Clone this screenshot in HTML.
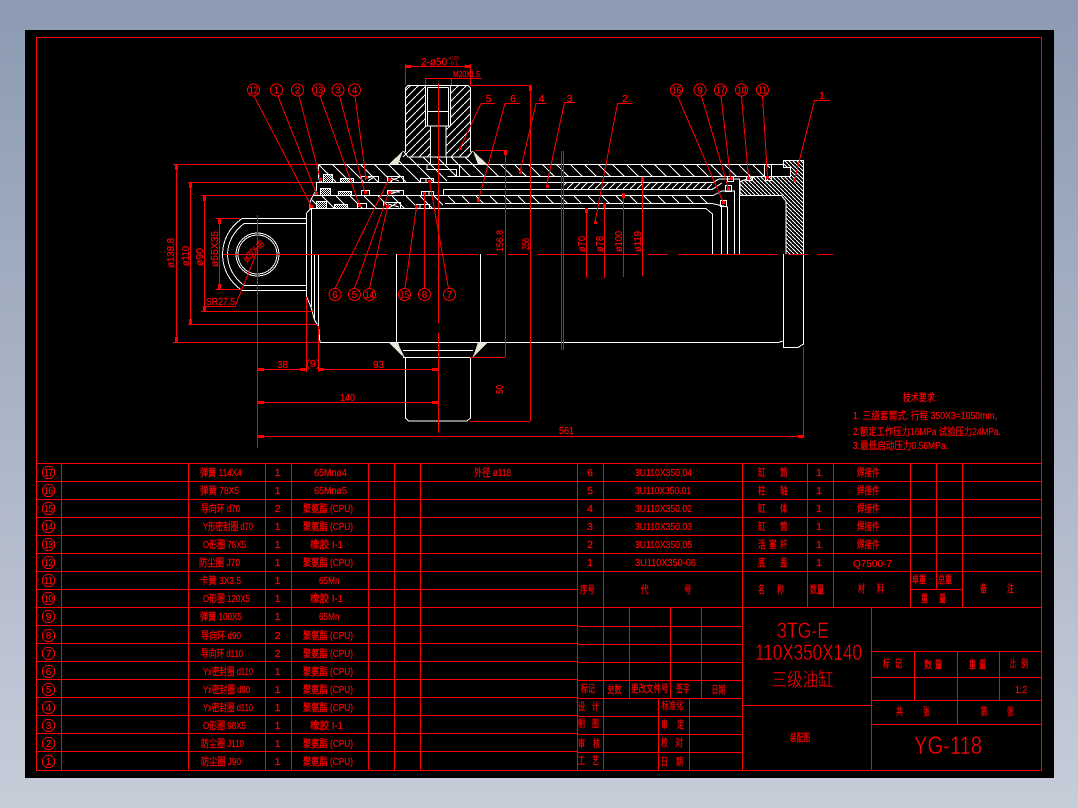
<!DOCTYPE html>
<html><head><meta charset="utf-8"><title>YG-118</title>
<style>
html,body{margin:0;padding:0;width:1078px;height:808px;overflow:hidden;background:linear-gradient(180deg,#8c9bb2 0%,#c7ccd9 100%)}
svg{position:absolute;left:0;top:0;display:block}
text{font-family:"Liberation Sans","WenQuanYi Zen Hei","Noto Sans CJK SC",sans-serif;fill:#f00;stroke:#f00;stroke-width:.2px;font-size:10.5px;white-space:pre}
.n{font-size:10px;text-anchor:middle}
.m{text-anchor:middle}
.r{stroke:#f00;fill:none}.w{stroke:#fff;fill:none}
.thin{stroke:#000;stroke-width:.4px}
</style></head><body>
<svg width="1078" height="808" viewBox="0 0 1078 808" xmlns="http://www.w3.org/2000/svg" shape-rendering="crispEdges">
<defs>
<pattern id="h1" width="14" height="14" patternUnits="userSpaceOnUse"><path d="M-1 -1L15 15" stroke="#fff" fill="none"/></pattern>
<pattern id="h2" width="7" height="7" patternUnits="userSpaceOnUse"><path d="M8 -1L-1 8" stroke="#fff" fill="none"/></pattern>
<pattern id="h3" width="8" height="8" patternUnits="userSpaceOnUse"><path d="M9 -1L-1 9" stroke="#fff" fill="none"/></pattern>
<pattern id="h4" width="4" height="4" patternUnits="userSpaceOnUse"><path d="M-1 -1L5 5" stroke="#fff" fill="none"/></pattern>
<pattern id="d" width="2" height="2" patternUnits="userSpaceOnUse"><rect width="1" height="1" fill="#fff"/><rect x="1" y="1" width="1" height="1" fill="#fff"/></pattern>
</defs>
<rect x="25" y="30" width="1029" height="748" fill="#000"/>

<!-- frame -->
<rect x="36.5" y="37.5" width="1005" height="733" class="r"/>

<!-- ============ table ============ -->
<path class="r" d="M36 463.5H1042M36 481.5H742M36 499.5H742M36 517.5H742M36 535.5H742M36 553.5H742M36 571.5H1042M36 589.5H61M420 589.5H577M36 607.5H1042M36 625.5H577M36 643.5H577M36 661.5H577M36 679.5H577M36 697.5H577M36 715.5H577M36 733.5H577M36 751.5H577
M742 481.5H1042M742 499.5H1042M742 517.5H1042M742 535.5H1042M742 553.5H1042M910 589.5H962M61 589.5H420
M577 626.5H742M577 644.5H742M577 662.5H742M577 680.5H742M577 698.5H742M577 716.5H742M577 734.5H742M577 752.5H742
M742 705.5H871M871 651.5H1042M871 677.5H1042M871 700.5H1042M871 724.5H1042
M61.5 463V770M188.5 463V770M265.5 463V770M291.5 463V770M368.5 463V770M394.5 463V770M420.5 463V770M577.5 463V770M603.5 463V770
M742.5 463V770M807.5 463V607M833.5 463V607M910.5 463V607M936.5 463V589M962.5 463V607
M629.5 607V698M670.5 607V698M701.5 607V698M658.5 698V770M689.5 698V770
M871.5 607V770M914.5 651V700M957.5 651V724M999.5 651V700"/>

<!-- circled numbers -->
<g class="r">
<circle cx="48.5" cy="472.5" r="6.2"/><circle cx="48.5" cy="490.5" r="6.2"/><circle cx="48.5" cy="508.5" r="6.2"/><circle cx="48.5" cy="526.5" r="6.2"/><circle cx="48.5" cy="544.5" r="6.2"/><circle cx="48.5" cy="562.5" r="6.2"/><circle cx="48.5" cy="580.5" r="6.2"/><circle cx="48.5" cy="598.5" r="6.2"/><circle cx="48.5" cy="616.5" r="6.2"/><circle cx="48.5" cy="635.5" r="6.2"/><circle cx="48.5" cy="653.5" r="6.2"/><circle cx="48.5" cy="671.5" r="6.2"/><circle cx="48.5" cy="689.5" r="6.2"/><circle cx="48.5" cy="707.5" r="6.2"/><circle cx="48.5" cy="725.5" r="6.2"/><circle cx="48.5" cy="743.5" r="6.2"/><circle cx="48.5" cy="761.5" r="6.2"/>
</g>
<text class="n" x="48.5" y="476" textLength="9" lengthAdjust="spacingAndGlyphs">17</text><text class="n" x="48.5" y="494" textLength="9" lengthAdjust="spacingAndGlyphs">16</text><text class="n" x="48.5" y="512" textLength="9" lengthAdjust="spacingAndGlyphs">15</text><text class="n" x="48.5" y="530" textLength="9" lengthAdjust="spacingAndGlyphs">14</text><text class="n" x="48.5" y="548" textLength="9" lengthAdjust="spacingAndGlyphs">13</text><text class="n" x="48.5" y="566" textLength="9" lengthAdjust="spacingAndGlyphs">12</text><text class="n" x="48.5" y="584" textLength="9" lengthAdjust="spacingAndGlyphs">11</text><text class="n" x="48.5" y="602" textLength="9" lengthAdjust="spacingAndGlyphs">10</text><text class="n" x="48.5" y="620">9</text><text class="n" x="48.5" y="639">8</text><text class="n" x="48.5" y="657">7</text><text class="n" x="48.5" y="675">6</text><text class="n" x="48.5" y="693">5</text><text class="n" x="48.5" y="711">4</text><text class="n" x="48.5" y="729">3</text><text class="n" x="48.5" y="747">2</text><text class="n" x="48.5" y="765">1</text>

<!-- names -->
<text x="200" y="476" textLength="41.7" lengthAdjust="spacingAndGlyphs">弹簧 114X4</text>
<text x="200" y="494" textLength="39" lengthAdjust="spacingAndGlyphs">弹簧 78X5</text>
<text x="201" y="512" textLength="39" lengthAdjust="spacingAndGlyphs">导向环 d70</text>
<text x="203" y="530" textLength="50" lengthAdjust="spacingAndGlyphs">Y形密封圈 d70</text>
<text x="203" y="548" textLength="43" lengthAdjust="spacingAndGlyphs">O形圈 78X5</text>
<text x="199" y="566" textLength="41" lengthAdjust="spacingAndGlyphs">防尘圈 J70</text>
<text x="200" y="584" textLength="41" lengthAdjust="spacingAndGlyphs">卡簧 3X3.5</text>
<text x="203" y="602" textLength="47" lengthAdjust="spacingAndGlyphs">O形圈 120X5</text>
<text x="200" y="620" textLength="42" lengthAdjust="spacingAndGlyphs">弹簧 100X5</text>
<text x="201" y="639" textLength="40" lengthAdjust="spacingAndGlyphs">导向环 d90</text>
<text x="201" y="657" textLength="42" lengthAdjust="spacingAndGlyphs">导向环 d110</text>
<text x="203" y="675" textLength="50" lengthAdjust="spacingAndGlyphs">Yx密封圈 d110</text>
<text x="203" y="693" textLength="47" lengthAdjust="spacingAndGlyphs">Yx密封圈 d90</text>
<text x="203" y="711" textLength="50" lengthAdjust="spacingAndGlyphs">Yx密封圈 d110</text>
<text x="203" y="729" textLength="43" lengthAdjust="spacingAndGlyphs">O形圈 98X5</text>
<text x="201" y="747" textLength="43" lengthAdjust="spacingAndGlyphs">防尘圈 J110</text>
<text x="201" y="765" textLength="40" lengthAdjust="spacingAndGlyphs">防尘圈 J90</text>
<!-- qty -->
<text class="m" x="277.5" y="476">1</text><text class="m" x="277.5" y="494">1</text><text class="m" x="277.5" y="512">2</text><text class="m" x="277.5" y="530">1</text><text class="m" x="277.5" y="548">1</text><text class="m" x="277.5" y="566">1</text><text class="m" x="277.5" y="584">1</text><text class="m" x="277.5" y="602">1</text><text class="m" x="277.5" y="620">1</text><text class="m" x="277.5" y="639">2</text><text class="m" x="277.5" y="657">2</text><text class="m" x="277.5" y="675">1</text><text class="m" x="277.5" y="693">1</text><text class="m" x="277.5" y="711">1</text><text class="m" x="277.5" y="729">1</text><text class="m" x="277.5" y="747">1</text><text class="m" x="277.5" y="765">1</text>
<!-- materials -->
<text x="314" y="476" textLength="33" lengthAdjust="spacingAndGlyphs">65Mnø4</text>
<text x="314" y="494" textLength="33" lengthAdjust="spacingAndGlyphs">65Mnø5</text>
<text x="303" y="512" textLength="50" lengthAdjust="spacingAndGlyphs">聚氨酯 (CPU)</text>
<text x="303" y="530" textLength="50" lengthAdjust="spacingAndGlyphs">聚氨酯 (CPU)</text>
<text x="310" y="548" textLength="33" lengthAdjust="spacingAndGlyphs">橡胶 I-1</text>
<text x="303" y="566" textLength="50" lengthAdjust="spacingAndGlyphs">聚氨酯 (CPU)</text>
<text x="319" y="584" textLength="20.5" lengthAdjust="spacingAndGlyphs">65Mn</text>
<text x="310" y="602" textLength="33" lengthAdjust="spacingAndGlyphs">橡胶 I-1</text>
<text x="319" y="620" textLength="20.5" lengthAdjust="spacingAndGlyphs">65Mn</text>
<text x="303" y="639" textLength="50" lengthAdjust="spacingAndGlyphs">聚氨酯 (CPU)</text>
<text x="303" y="657" textLength="50" lengthAdjust="spacingAndGlyphs">聚氨酯 (CPU)</text>
<text x="303" y="675" textLength="50" lengthAdjust="spacingAndGlyphs">聚氨酯 (CPU)</text>
<text x="303" y="693" textLength="50" lengthAdjust="spacingAndGlyphs">聚氨酯 (CPU)</text>
<text x="303" y="711" textLength="50" lengthAdjust="spacingAndGlyphs">聚氨酯 (CPU)</text>
<text x="310" y="729" textLength="33" lengthAdjust="spacingAndGlyphs">橡胶 I-1</text>
<text x="303" y="747" textLength="50" lengthAdjust="spacingAndGlyphs">聚氨酯 (CPU)</text>
<text x="303" y="765" textLength="50" lengthAdjust="spacingAndGlyphs">聚氨酯 (CPU)</text>

<text x="474" y="476" textLength="37" lengthAdjust="spacingAndGlyphs">外径 ø118</text>
<text class="m" x="590" y="476">6</text><text class="m" x="590" y="494">5</text><text class="m" x="590" y="512">4</text><text class="m" x="590" y="530">3</text><text class="m" x="590" y="548">2</text><text class="m" x="590" y="566">1</text>
<text x="635" y="476" textLength="57" lengthAdjust="spacingAndGlyphs">3U110X350.04</text>
<text x="635" y="494" textLength="56" lengthAdjust="spacingAndGlyphs">3U110X350.01</text>
<text x="635" y="512" textLength="57" lengthAdjust="spacingAndGlyphs">3U110X350.02</text>
<text x="635" y="530" textLength="57" lengthAdjust="spacingAndGlyphs">3U110X350.03</text>
<text x="635" y="548" textLength="57" lengthAdjust="spacingAndGlyphs">3U110X350.05</text>
<text x="635" y="566" textLength="61" lengthAdjust="spacingAndGlyphs">3U110X350-06</text>
<text x="580" y="593" textLength="15" lengthAdjust="spacingAndGlyphs">序号</text>
<text x="641" y="593" textLength="7.5" lengthAdjust="spacingAndGlyphs">代</text>
<text x="684" y="593" textLength="7.5" lengthAdjust="spacingAndGlyphs">号</text>

<!-- right columns -->
<text x="758" y="476" textLength="7.5" lengthAdjust="spacingAndGlyphs">缸</text><text x="780" y="476" textLength="7.5" lengthAdjust="spacingAndGlyphs">筒</text>
<text x="758" y="494" textLength="7.5" lengthAdjust="spacingAndGlyphs">柱</text><text x="780" y="494" textLength="7.5" lengthAdjust="spacingAndGlyphs">轴</text>
<text x="758" y="512" textLength="7.5" lengthAdjust="spacingAndGlyphs">缸</text><text x="780" y="512" textLength="7.5" lengthAdjust="spacingAndGlyphs">体</text>
<text x="758" y="530" textLength="7.5" lengthAdjust="spacingAndGlyphs">缸</text><text x="780" y="530" textLength="7.5" lengthAdjust="spacingAndGlyphs">筒</text>
<text x="758" y="548" textLength="7.5" lengthAdjust="spacingAndGlyphs">活</text><text x="769" y="548" textLength="7.5" lengthAdjust="spacingAndGlyphs">塞</text><text x="780" y="548" textLength="7.5" lengthAdjust="spacingAndGlyphs">杆</text>
<text x="758" y="566" textLength="7.5" lengthAdjust="spacingAndGlyphs">底</text><text x="780" y="566" textLength="7.5" lengthAdjust="spacingAndGlyphs">盖</text>
<text class="m" x="819" y="476">1</text><text class="m" x="819" y="494">1</text><text class="m" x="819" y="512">1</text><text class="m" x="819" y="530">1</text><text class="m" x="819" y="548">1</text><text class="m" x="819" y="566">1</text>
<text x="857" y="476" textLength="22.5" lengthAdjust="spacingAndGlyphs">焊接件</text>
<text x="857" y="494" textLength="22.5" lengthAdjust="spacingAndGlyphs">焊接件</text>
<text x="857" y="512" textLength="22.5" lengthAdjust="spacingAndGlyphs">焊接件</text>
<text x="857" y="530" textLength="22.5" lengthAdjust="spacingAndGlyphs">焊接件</text>
<text x="857" y="548" textLength="22.5" lengthAdjust="spacingAndGlyphs">焊接件</text>
<text x="853" y="567" textLength="39" lengthAdjust="spacingAndGlyphs">Q7500-7</text>
<text x="758" y="593" textLength="7" lengthAdjust="spacingAndGlyphs">名</text><text x="777" y="593" textLength="7" lengthAdjust="spacingAndGlyphs">称</text>
<text x="810" y="593" textLength="14" lengthAdjust="spacingAndGlyphs">数量</text>
<text x="858" y="592" textLength="7" lengthAdjust="spacingAndGlyphs">材</text><text x="877" y="592" textLength="7" lengthAdjust="spacingAndGlyphs">料</text>
<text x="912" y="583" textLength="14" lengthAdjust="spacingAndGlyphs">单重</text>
<text x="938" y="583" textLength="14" lengthAdjust="spacingAndGlyphs">总重</text>
<text x="921" y="602" textLength="7" lengthAdjust="spacingAndGlyphs">重</text><text x="939" y="602" textLength="7" lengthAdjust="spacingAndGlyphs">量</text>
<text x="980" y="592" textLength="7" lengthAdjust="spacingAndGlyphs">备</text><text x="1007" y="592" textLength="7" lengthAdjust="spacingAndGlyphs">注</text>

<!-- signoff -->
<text x="581" y="692" textLength="14" lengthAdjust="spacingAndGlyphs">标记</text>
<text x="607.5" y="693" textLength="14" lengthAdjust="spacingAndGlyphs">处数</text>
<text x="631" y="692" textLength="37.5" lengthAdjust="spacingAndGlyphs">更改文件号</text>
<text x="676" y="692" textLength="14" lengthAdjust="spacingAndGlyphs">签字</text>
<text x="711.5" y="693" textLength="14" lengthAdjust="spacingAndGlyphs">日期</text>
<text x="578" y="710" textLength="7" lengthAdjust="spacingAndGlyphs">设</text><text x="592" y="710" textLength="7" lengthAdjust="spacingAndGlyphs">计</text>
<text x="578" y="727" textLength="7" lengthAdjust="spacingAndGlyphs">制</text><text x="592" y="727" textLength="7" lengthAdjust="spacingAndGlyphs">图</text>
<text x="578" y="747" textLength="7" lengthAdjust="spacingAndGlyphs">审</text><text x="593" y="747" textLength="7" lengthAdjust="spacingAndGlyphs">核</text>
<text x="578" y="764" textLength="7" lengthAdjust="spacingAndGlyphs">工</text><text x="592" y="764" textLength="7" lengthAdjust="spacingAndGlyphs">艺</text>
<text x="661.5" y="709" textLength="22" lengthAdjust="spacingAndGlyphs">标准化</text>
<text x="661" y="728" textLength="7" lengthAdjust="spacingAndGlyphs">审</text><text x="677" y="728" textLength="7" lengthAdjust="spacingAndGlyphs">定</text>
<text x="661" y="746" textLength="7" lengthAdjust="spacingAndGlyphs">校</text><text x="675" y="746" textLength="8" lengthAdjust="spacingAndGlyphs">对</text>
<text x="661" y="765" textLength="7" lengthAdjust="spacingAndGlyphs">日</text><text x="676" y="765" textLength="7" lengthAdjust="spacingAndGlyphs">期</text>

<!-- title block -->
<text class="thin" x="777" y="638" style="font-size:22px" textLength="52" lengthAdjust="spacingAndGlyphs">3TG-E</text>
<text class="thin" x="755" y="660" style="font-size:22px" textLength="107" lengthAdjust="spacingAndGlyphs">110X350X140</text>
<text class="thin" x="771.5" y="686" style="font-size:19px" textLength="62" lengthAdjust="spacingAndGlyphs">三级油缸</text>
<text x="790" y="741" textLength="20" lengthAdjust="spacingAndGlyphs">装配图</text>
<text x="883" y="667" textLength="7" lengthAdjust="spacingAndGlyphs">标</text><text x="895" y="667" textLength="7" lengthAdjust="spacingAndGlyphs">记</text>
<text x="924" y="668" textLength="8" lengthAdjust="spacingAndGlyphs">数</text><text x="935" y="668" textLength="7" lengthAdjust="spacingAndGlyphs">量</text>
<text x="969" y="668" textLength="7" lengthAdjust="spacingAndGlyphs">重</text><text x="979" y="668" textLength="7" lengthAdjust="spacingAndGlyphs">量</text>
<text x="1010" y="667" textLength="6" lengthAdjust="spacingAndGlyphs">比</text><text x="1021" y="667" textLength="7" lengthAdjust="spacingAndGlyphs">例</text>
<text x="1015" y="693" textLength="12" lengthAdjust="spacingAndGlyphs">1:2</text>
<text x="896" y="715" textLength="7" lengthAdjust="spacingAndGlyphs">共</text><text x="923" y="715" textLength="7" lengthAdjust="spacingAndGlyphs">张</text>
<text x="980.5" y="715" textLength="7" lengthAdjust="spacingAndGlyphs">第</text><text x="1007" y="715" textLength="7" lengthAdjust="spacingAndGlyphs">张</text>
<text class="thin" x="914" y="754" style="font-size:25px" textLength="68" lengthAdjust="spacingAndGlyphs">YG-118</text>

<!-- technical requirements -->
<text x="903" y="401" textLength="34" lengthAdjust="spacingAndGlyphs">技术要求:</text>
<text x="853" y="419" textLength="144" lengthAdjust="spacingAndGlyphs">1. 三级套筒式, 行程 350X3=1050mm,</text>
<text x="853" y="435" textLength="148" lengthAdjust="spacingAndGlyphs">2.额定工作压力16MPa 试验压力24MPa.</text>
<text x="853" y="449" textLength="95" lengthAdjust="spacingAndGlyphs">3.最低启动压力0.56MPa.</text>

<!-- ============ hatching ============ -->
<rect x="319" y="165" width="128" height="17" fill="url(#h1)"/>
<rect x="447" y="165" width="323" height="11" fill="url(#h1)"/>
<rect x="312" y="196" width="131" height="12" fill="url(#h1)"/>
<rect x="443" y="196" width="267" height="7" fill="url(#h1)"/>
<rect x="563" y="182" width="149" height="7" fill="url(#h2)"/>
<path d="M405.5 88L408 85.5H425V126H430V157H399L405.5 152Z" fill="url(#h3)"/>
<path d="M451 85.5H468L470.5 88V152L477 157H446V126H451Z" fill="url(#h3)"/>
<path d="M398 157.5H478L488 164H388Z" fill="url(#h1)"/>
<path d="M783.5 160.5H803.5V254H786V201.7L781.7 196H740V181.7L755 177H790.7V167.3H783.5Z" fill="url(#h4)"/>

<!-- ============ drawing, white ============ -->
<g class="w">
<!-- cylinder upper -->
<path d="M318.5 164.5H783.5V160.5H803.5V254M783.5 160.5V167.5H790.5V176.5H755L740 181.5V195.5H781.5L786 201.5V254"/>
<path d="M318.5 164.5V177L320 182.5H316.5V190L313 195.5L310 202V208.5H706L712.5 214V254"/>
<path d="M447.5 176.5H790M316.5 182.5H713L719 179H739.5V254"/>
<path d="M443.5 189.5H712L722 183M443.5 189.5V195.5M313 195.5H713L722 191H734.5V254"/>
<path d="M445 203.5H712L727.5 207V254M721.5 206V254"/>
<path d="M430.5 157V164M446.5 157V164M427 164V169.5H456.5V176.5M459.5 164V176.5"/>
<!-- rod eye -->
<path d="M306.5 213L311 208.5M306.5 213V296.5L311 307L314.5 320L318.5 326L320 342.5H778L783.5 341M311.5 208V307M314.5 254V320M318.5 254V326"/>
<path d="M306.5 218.5H242Q223 232 222.5 254.5Q223 277 242 290.5H306.5"/>
<path d="M306.5 223.5H244Q228 236 227.5 254.5Q228 273 244 285.5H306.5"/>
<circle cx="257.5" cy="254.5" r="21.5"/><circle cx="257.5" cy="254.5" r="19.5"/>
<!-- port upper -->
<path d="M405.5 152V88L408 85.5H468L470.5 88V152"/>
<path d="M425.5 85.5V126H450.5V85.5M427.5 87.5V126M448.5 87.5V126M427.5 87.5H448.5M427.5 111.5H448.5M430.5 126V157M446 126V157"/>
<path d="M403.5 151L408 157H468L472.5 151"/>
<!-- port lower -->
<path d="M396.5 254V342M480.5 254V342M403 350.5H473M403 357.5H473M405.5 357V418L408.5 421H467L470.5 418V357"/>
<path d="M396.5 342L404 357M480.5 342L473 357"/>
<!-- cap lower -->
<path d="M783.5 254V347.5H798L803.5 344V254"/>
<!-- seal rects -->
<rect x="323.5" y="174.5" width="9" height="8" fill="url(#d)"/>
<rect x="340.5" y="178.5" width="13" height="4" fill="url(#d)"/>
<rect x="361.5" y="176.5" width="17" height="6"/>
<rect x="387.5" y="176.5" width="16" height="6"/>
<rect x="420.5" y="178.5" width="13" height="4"/>
<rect x="320.5" y="188.5" width="10" height="7" fill="url(#d)"/>
<rect x="338.5" y="191.5" width="13" height="4" fill="url(#d)"/>
<rect x="361.5" y="190.5" width="8" height="5"/>
<rect x="387.5" y="190.5" width="16" height="5"/>
<rect x="421.5" y="191.5" width="12" height="4"/>
<rect x="316.5" y="201.5" width="10" height="7" fill="url(#d)"/>
<rect x="334.5" y="204.5" width="13" height="4" fill="url(#d)"/>
<rect x="357.5" y="203.5" width="9" height="5"/>
<rect x="383.5" y="202.5" width="17" height="6"/>
<rect x="416.5" y="204.5" width="13" height="4"/>
<path d="M365 179L372 176.5M368 181L374 177M391 178L399 181M390 181L400 177M426 179V182M391 192H400M391 194L399 191M424 192V195M429 192V195M388 204L399 207M390 207L397 203M420 205V208M425 205V208" />
<!-- small seals right -->
<rect x="720.5" y="200.5" width="6" height="6"/><rect x="725.5" y="185.5" width="6" height="6"/><rect x="727.5" y="176.5" width="6" height="5"/><rect x="746.5" y="176.5" width="6" height="4"/><rect x="765.5" y="176.5" width="6" height="4"/>
<path d="M764.5 165V176M771.5 165V176"/>
</g>
<!-- weld triangles -->
<path d="M388.5 164.5L403 151L398 164.5Z" fill="#e9e6d8"/>
<path d="M487.5 164.5L473 151L478 164.5Z" fill="#e9e6d8"/>
<path d="M388.5 342.5L403 357L398 342.5Z" fill="#e9e6d8"/>
<path d="M487.5 342.5L473 357L478 342.5Z" fill="#e9e6d8"/>

<!-- ============ red dims ============ -->
<g class="r">
<!-- centre lines -->
<path d="M223 254.5H357M363 254.5H387M397 254.5H478M487 254.5H497M508 254.5H528M538 254.5H638M648 254.5H668M678 254.5H778M788 254.5H808M818 254.5H833"/>
<path d="M438.5 83V323M438.5 333V433M257.5 215V448"/>
<!-- left diameters -->
<path d="M173 164.5H318M173 342.5H320M176.5 164V342M188 182.5H316M188 324.5H318M190.5 182V324M201 195.5H313M201 311.5H314M204.5 195V311M216 218.5H240M216 289.5H242M219.5 218V289"/>
<path d="M206 306.5H235L256.5 253"/>
<!-- lower horizontal dims -->
<path d="M306.5 297V372M318.5 326V372M258 369.5H306M318 369.5H438M258 402.5H438M258 436.5H804M803.5 347V438"/>
<path d="M470 357.5H505M470 421.5H530M505.5 150V357M530.5 85V421M470 85.5H530M475 150.5H505"/>
<!-- top dims -->
<path d="M405.5 64V85M470.5 64V85M405 66.5H471M425 78.5H482M425.5 78V85M451.5 78V85"/>
<!-- double rule -->
<path d="M561.5 151V350M563.5 151V350"/>
<!-- section dims -->
<path d="M586.5 208V278M604.5 203V278M623.5 193V277M642.5 177V276"/>
<!-- top-left leaders -->
<path d="M254 96L311.5 206.5M278 96L316.5 194M299 96L320.5 180M320 96L360 206.5M339.5 96L365 193M355 96L366 178"/>
<circle cx="253.5" cy="90" r="6"/><circle cx="276.5" cy="90" r="6"/><circle cx="297.5" cy="90" r="6"/><circle cx="318.5" cy="90" r="6"/><circle cx="338" cy="90" r="6"/><circle cx="354.5" cy="90" r="6"/>
<!-- top-right leaders -->
<path d="M677.5 96L723.5 203M701.5 96L728.5 189M721 96L730.5 178M741.5 96L748.5 178M762.5 96L767.5 177"/>
<circle cx="676.5" cy="90" r="6"/><circle cx="700" cy="90" r="6"/><circle cx="720.5" cy="90" r="6"/><circle cx="741.5" cy="90" r="6"/><circle cx="762.5" cy="90" r="6"/>
<!-- numbered leaders -->
<path d="M830 100.5H814.5L794.5 180M632.5 103.5H617.5L595 222.5M575 102.5H564.5L546.5 186M546.5 103.5H536L520 172M520 103.5H505L478.5 200M495 103.5H481L460 148.5"/>
<!-- bottom leaders -->
<path d="M335 288.5L388.5 180M354.5 288.5L388.5 193M369.5 288.5L387.5 206.5M405 288.5L416.5 206.5M424.5 288.5V193M448.5 288.5L429.5 181.5"/>
<circle cx="335" cy="294.5" r="6"/><circle cx="354.5" cy="294.5" r="6"/><circle cx="369.5" cy="294.5" r="6"/><circle cx="404.5" cy="294.5" r="6"/><circle cx="424.5" cy="294.5" r="6"/><circle cx="449.5" cy="294.5" r="6"/>
</g>
<!-- arrow ticks -->
<path fill="#f00" d="M175 165H178V170H175ZM175 337H178V342H175ZM189 183H192V188H189ZM189 319H192V324H189ZM203 196H206V201H203ZM203 306H206V311H203ZM218 219H221V224H218ZM218 284H221V289H218ZM258 368H264V371H258ZM300 368H306V371H300ZM318 368H324V371H318ZM432 368H438V371H432ZM258 401H264V404H258ZM432 401H438V404H432ZM258 435H264V438H258ZM798 435H804V438H798ZM504 150H507V155H504ZM585 208H588V213H585ZM603 203H606V208H603ZM622 193H625V198H622ZM641 177H644V182H641ZM529 86H532V91H529ZM406 65H411V68H406ZM465 65H470V68H465Z"/>

<!-- red-on-part dots -->
<path fill="#f00" d="M310 205h3v3h-3zM315 192h3v3h-3zM319 178h3v3h-3zM358 204h3v3h-3zM364 191h3v3h-3zM365 176h3v3h-3zM388 178h3v3h-3zM388 191h3v3h-3zM386 205h3v3h-3zM415 205h3v3h-3zM423 192h3v3h-3zM428 180h3v3h-3zM722 201h3v3h-3zM727 187h3v3h-3zM730 177h3v3h-3zM747 177h3v3h-3zM766 176h3v3h-3zM793 179h3v3h-3zM594 221h3v3h-3zM546 185h3v3h-3zM519 171h3v3h-3zM477 199h3v3h-3zM459 147h3v3h-3z"/>

<!-- callout numbers -->
<text class="n" x="253.5" y="93.5" textLength="9" lengthAdjust="spacingAndGlyphs">12</text><text class="n" x="276.5" y="93.5">1</text><text class="n" x="297.5" y="93.5">2</text><text class="n" x="318.5" y="93.5" textLength="9" lengthAdjust="spacingAndGlyphs">13</text><text class="n" x="338" y="93.5">3</text><text class="n" x="354.5" y="93.5">4</text>
<text class="n" x="676.5" y="93.5" textLength="9" lengthAdjust="spacingAndGlyphs">16</text><text class="n" x="700" y="93.5">9</text><text class="n" x="720.5" y="93.5" textLength="9" lengthAdjust="spacingAndGlyphs">17</text><text class="n" x="741.5" y="93.5" textLength="9" lengthAdjust="spacingAndGlyphs">10</text><text class="n" x="762.5" y="93.5" textLength="9" lengthAdjust="spacingAndGlyphs">11</text>
<text class="n" x="335" y="298">6</text><text class="n" x="354.5" y="298">5</text><text class="n" x="369.5" y="298" textLength="9" lengthAdjust="spacingAndGlyphs">14</text><text class="n" x="404.5" y="298" textLength="9" lengthAdjust="spacingAndGlyphs">15</text><text class="n" x="424.5" y="298">8</text><text class="n" x="449.5" y="298">7</text>
<text class="m" x="488.5" y="102">5</text><text class="m" x="513" y="102">6</text><text class="m" x="541.5" y="102">4</text><text class="m" x="569.5" y="102">3</text><text class="m" x="625" y="102">2</text><text class="m" x="822" y="99">1</text>

<!-- dim text -->
<text x="421" y="65.5" style="font-size:11px" textLength="26" lengthAdjust="spacingAndGlyphs">2-ø50</text>
<text x="448" y="60" style="font-size:5.5px;stroke-width:0" textLength="11" lengthAdjust="spacingAndGlyphs">+0.05</text>
<text x="449" y="65" style="font-size:5.5px;stroke-width:0" textLength="9" lengthAdjust="spacingAndGlyphs">-0.1</text>
<text x="453" y="77" style="font-size:8px" textLength="27" lengthAdjust="spacingAndGlyphs">M20X1.5</text>
<text x="277" y="368" textLength="11" lengthAdjust="spacingAndGlyphs">38</text>
<text x="306" y="367" textLength="14" lengthAdjust="spacingAndGlyphs">(9)</text>
<text x="373" y="368" textLength="11" lengthAdjust="spacingAndGlyphs">93</text>
<text x="340" y="401" textLength="15" lengthAdjust="spacingAndGlyphs">140</text>
<text x="559" y="434" textLength="15" lengthAdjust="spacingAndGlyphs">561</text>
<text x="206" y="305" textLength="29" lengthAdjust="spacingAndGlyphs">SR27.5</text>
<text transform="rotate(-90 174 268)" x="174" y="268" textLength="30" lengthAdjust="spacingAndGlyphs">ø138.8</text>
<text transform="rotate(-90 189 266)" x="189" y="266" textLength="20" lengthAdjust="spacingAndGlyphs">ø110</text>
<text transform="rotate(-90 203 266)" x="203" y="266" textLength="18" lengthAdjust="spacingAndGlyphs">ø90</text>
<text transform="rotate(-90 218 267)" x="218" y="267" textLength="36" lengthAdjust="spacingAndGlyphs">ø55X35</text>
<text transform="rotate(-90 503 252)" x="503" y="252" style="font-size:9px" textLength="22" lengthAdjust="spacingAndGlyphs">156.8</text>
<text transform="rotate(-90 529 250)" x="529" y="250" textLength="12" lengthAdjust="spacingAndGlyphs">256</text>
<text transform="rotate(-90 503 394)" x="503" y="394" textLength="9" lengthAdjust="spacingAndGlyphs">50</text>
<text transform="rotate(-90 585 252)" x="585" y="252" textLength="16" lengthAdjust="spacingAndGlyphs">ø70</text>
<text transform="rotate(-90 603 252)" x="603" y="252" textLength="16" lengthAdjust="spacingAndGlyphs">ø78</text>
<text transform="rotate(-90 622 252)" x="622" y="252" textLength="21" lengthAdjust="spacingAndGlyphs">ø100</text>
<text transform="rotate(-90 641 252)" x="641" y="252" textLength="21" lengthAdjust="spacingAndGlyphs">ø119</text>
<text transform="rotate(-45 247 263)" x="247" y="263" textLength="26" lengthAdjust="spacingAndGlyphs">ø30H8</text>
</svg>
</body></html>
